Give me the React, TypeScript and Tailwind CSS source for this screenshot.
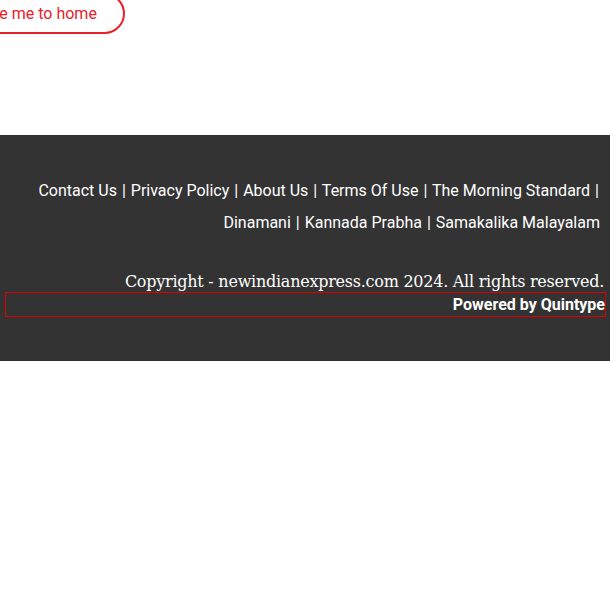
export default function App() {
  const links = [
    "Contact Us",
    "Privacy Policy",
    "About Us",
    "Terms Of Use",
    "The Morning Standard",
    "Dinamani",
    "Kannada Prabha",
    "Samakalika Malayalam",
  ];

  return (
    <div className="min-h-[610px] bg-white" style={{ fontFamily: "Roboto, 'Noto Sans', sans-serif" }}>
      <div className="h-[135px] overflow-hidden">
        <button
          type="button"
          className="-ml-[55px] -mt-[7px] flex h-[41px] items-center rounded-full border-2 border-[#e8202a] bg-white pl-[27px] pr-[26px] text-[16px] text-[#e8202a]"
        >
          Take me to home
        </button>
      </div>

      <footer className="bg-[#333333] pb-[44px] pt-[40px] text-white">
        <p className="pl-4 pr-[10px] text-right text-[16px] leading-[32px]">
          {links.map((link, i) => (
            <span key={link}>
              <a href="#" className="whitespace-nowrap">
                {link}
              </a>
              {i < links.length - 1 && (
                <>
                  {" "}
                  <span className="px-[1px]">|</span>{" "}
                </>
              )}
            </span>
          ))}
        </p>

        <p
          className="-mb-[2px] mt-[31px] pr-[6px] text-right text-[16px] leading-[24px] tracking-[-0.25px]"
          style={{ fontFamily: "'DejaVu Serif', 'Liberation Serif', serif" }}
        >
          Copyright - newindianexpress.com 2024. All rights reserved.
        </p>
        <div className="ml-[5px] mr-[4px] flex h-[25px] items-center justify-end border border-[#e00000] text-[16px] font-bold">
          Powered by Quintype
        </div>
      </footer>
    </div>
  );
}
